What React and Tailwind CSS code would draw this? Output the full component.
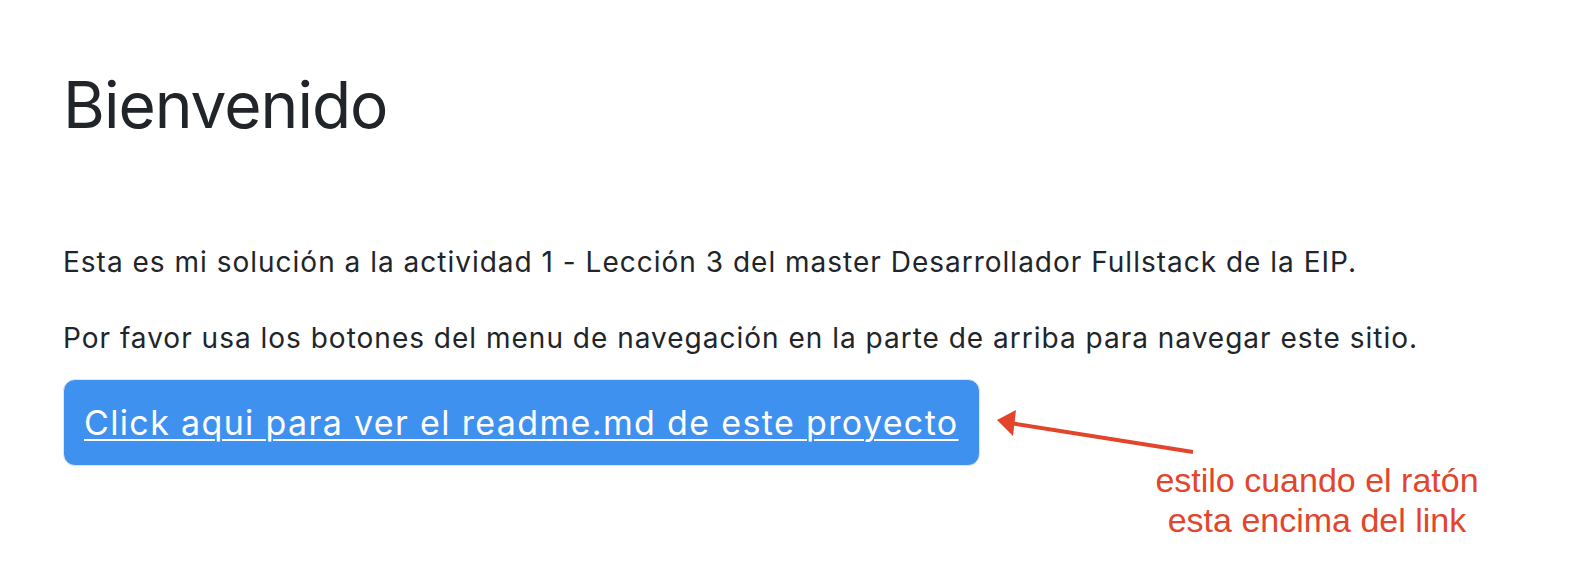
export default function App() {
  return (
    <div className="relative w-[1576px] h-[576px] bg-white overflow-hidden text-[#212529]" style={{ fontFamily: 'Inter, "Liberation Sans", Arial, sans-serif' }}>
      <div className="pl-[63px] pt-[66px]">
        <h1 className="text-[64px] leading-[77px] font-normal tracking-[-1px]">Bienvenido</h1>
        <p className="mt-[102px] text-[28px] leading-[34px] tracking-[1px]">Esta es mi solución a la actividad 1 - Lección 3 del master Desarrollador Fullstack de la EIP.</p>
        <p className="mt-[42px] text-[28px] leading-[34px] tracking-[1px]">Por favor usa los botones del menu de navegación en la parte de arriba para navegar este sitio.</p>
        <a href="#" className="mt-[24px] inline-flex items-center h-[87px] px-[20px] bg-[#3f91f0] border border-[#e3e7ea] rounded-[12px] text-white underline text-[34px] leading-[40px] tracking-[1.35px] decoration-[2px] underline-offset-[4px]">
          Click aqui para ver el readme.md de este proyecto
        </a>
      </div>
      <svg className="absolute left-0 top-0" width="1576" height="576">
        <line x1="1193" y1="452" x2="1010" y2="423" stroke="#e2452c" strokeWidth="4" />
        <polygon points="997,420 1016,410 1013,436" fill="#e2452c" />
      </svg>
      <div className="absolute left-[1117px] top-[460px] w-[400px] text-center text-[34px] leading-[40px] text-[#e2452c]" style={{ fontFamily: '"Liberation Sans", Arial, sans-serif' }}>
        estilo cuando el ratón<br />esta encima del link
      </div>
    </div>
  );
}
